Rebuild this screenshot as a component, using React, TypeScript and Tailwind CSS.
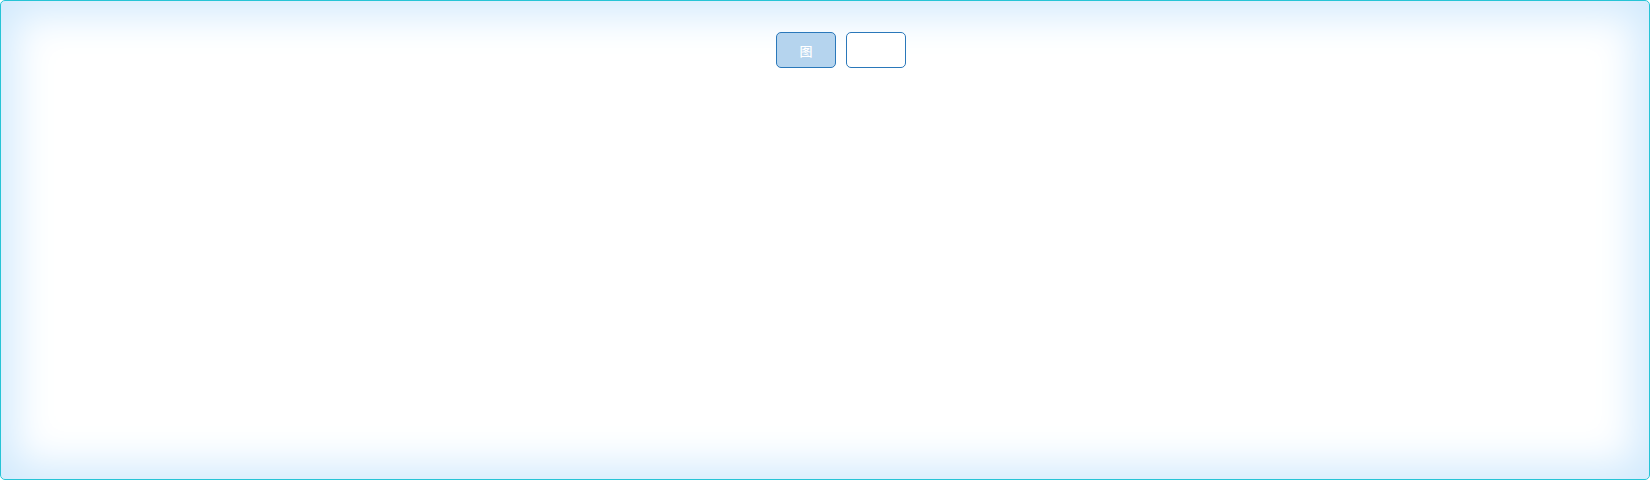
export default function App() {
  return (
    <div className="w-[1650px] h-[480px] bg-white">
      <div className="w-full h-full rounded-[5px] border border-[#26c4d6] bg-white shadow-[inset_0_0_40px_14px_#d2eafd] flex justify-center items-start pt-[31px] pl-[32px]" style={{ fontFamily: '"Noto Sans CJK SC", "Noto Sans", sans-serif' }}>
        <div className="flex gap-[10px]">
          <button className="w-[60px] h-[36px] rounded-[5px] border border-[#2a78ba] bg-[#b5d4ee] text-white text-[13px] font-medium leading-none flex items-center justify-center">图</button>
          <button className="w-[60px] h-[36px] rounded-[5px] border border-[#2a78ba] bg-white"></button>
        </div>
      </div>
    </div>
  );
}
